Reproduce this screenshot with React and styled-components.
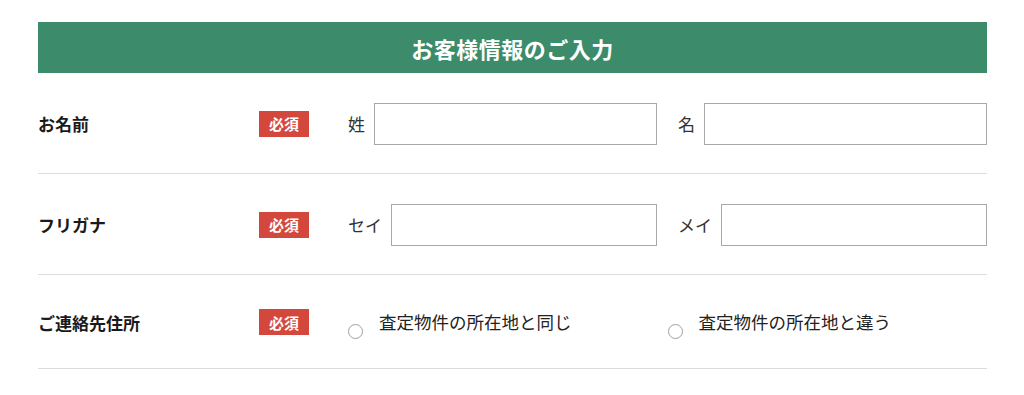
import React from 'react';
import styled, { createGlobalStyle } from 'styled-components';

const GlobalStyle = createGlobalStyle`
  body {
    margin: 0;
    background: #fff;
    font-family: "Noto Sans CJK JP", "Noto Sans", sans-serif;
    color: #222;
  }
`;

const rows = [
  {
    label: 'お名前',
    fields: [
      { name: 'sei', caption: '姓' },
      { name: 'mei', caption: '名' },
    ],
  },
  {
    label: 'フリガナ',
    fields: [
      { name: 'sei_kana', caption: 'セイ' },
      { name: 'mei_kana', caption: 'メイ' },
    ],
  },
];

const addressOptions = ['査定物件の所在地と同じ', '査定物件の所在地と違う'];

const App = () => (
  <Page>
    <GlobalStyle />
    <Heading>お客様情報のご入力</Heading>
    {rows.map((row) => (
      <Row key={row.label}>
        <RowLabel>{row.label}</RowLabel>
        <Required>必須</Required>
        <FieldPair>
          {row.fields.map((field) => (
            <Field key={field.name}>
              <Caption>{field.caption}</Caption>
              <TextInput name={field.name} type="text" />
            </Field>
          ))}
        </FieldPair>
      </Row>
    ))}
    <Row $compact>
      <RowLabel>ご連絡先住所</RowLabel>
      <Required>必須</Required>
      <RadioGroup>
        {addressOptions.map((option) => (
          <RadioOption key={option}>
            <RadioMark />
            <RadioText>{option}</RadioText>
          </RadioOption>
        ))}
      </RadioGroup>
    </Row>
  </Page>
);

const Page = styled.div`
  width: 949px;
  padding: 22px 0 0 38px;
`;

const Heading = styled.h2`
  margin: 0;
  height: 51px;
  display: flex;
  align-items: center;
  justify-content: center;
  background: #3c8c6c;
  color: #fff;
  font-size: 22px;
  font-weight: 700;
  line-height: 1;
  letter-spacing: 0.5px;
`;

const Row = styled.div`
  display: grid;
  grid-template-columns: 221px 50px 1fr;
  align-items: center;
  padding: ${({ $compact }) => ($compact ? '30px 0 29px' : '29.5px 0 28.5px')};
  border-bottom: 1px solid #dcdcdc;
`;

const RowLabel = styled.div`
  font-size: 17px;
  font-weight: 700;
  color: #1a1a1a;
  line-height: 1;
`;

const Required = styled.span`
  display: flex;
  align-items: center;
  justify-content: center;
  width: 50px;
  height: 26px;
  background: #d4473d;
  color: #fff;
  font-size: 15px;
  font-weight: 700;
  line-height: 1;
`;

const FieldPair = styled.div`
  margin-left: 39px;
  display: grid;
  grid-template-columns: 1fr 1fr;
  column-gap: 21px;
`;

const Field = styled.label`
  display: flex;
  align-items: center;
`;

const Caption = styled.span`
  margin-right: 9px;
  font-size: 17px;
  color: #333;
  line-height: 1;
  white-space: nowrap;
`;

const TextInput = styled.input`
  flex: 1;
  min-width: 0;
  height: 42px;
  box-sizing: border-box;
  margin: 0;
  border: 1px solid #a9a9a9;
  border-radius: 0;
  background: #fff;
  font-family: inherit;
  font-size: 16px;
  padding: 0 8px;
`;

const RadioGroup = styled.div`
  margin-left: 39px;
  display: grid;
  grid-template-columns: 1fr 1fr;
  height: 34px;
`;

const RadioOption = styled.label`
  display: flex;
  align-items: center;
`;

const RadioMark = styled.span`
  width: 15px;
  height: 15px;
  box-sizing: border-box;
  margin: 18px 16px 0 0;
  border: 1px solid #a0a0a0;
  border-radius: 50%;
  background: #fff;
  flex-shrink: 0;
`;

const RadioText = styled.span`
  font-size: 17.5px;
  color: #222;
  line-height: 1;
`;

export default App;
